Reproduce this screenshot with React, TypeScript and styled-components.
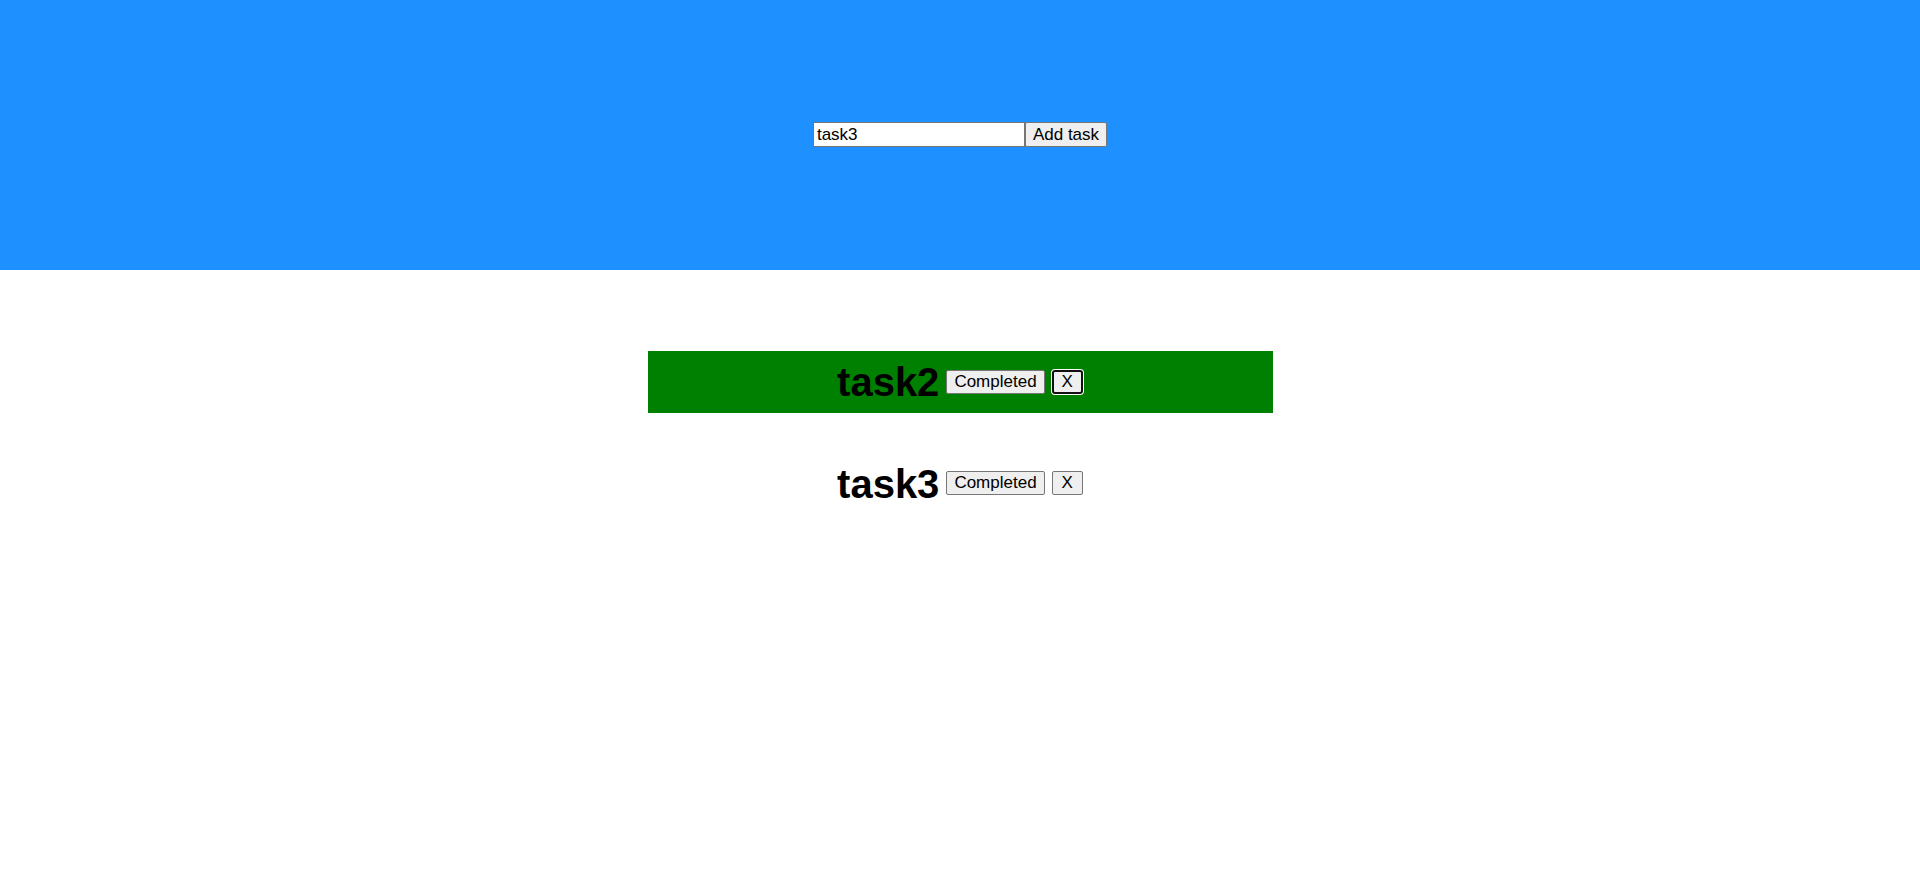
import React from "react";
import styled, { createGlobalStyle } from "styled-components";

const GlobalStyle = createGlobalStyle`
  html, body {
    margin: 0;
    padding: 0;
    background: #ffffff;
    font-family: "Liberation Sans", Arial, sans-serif;
    color: #000000;
  }
`;

const Page = styled.div`
  display: flex;
  flex-direction: column;
  min-height: 893px;
`;

const Header = styled.header`
  height: 270px;
  background: #1e90ff;
  display: flex;
  align-items: center;
  justify-content: center;
`;

const Form = styled.form`
  display: flex;
  align-items: center;
  margin-top: -1px;
`;

const TextInput = styled.input`
  box-sizing: border-box;
  width: 212px;
  height: 25px;
  padding: 2px 3px;
  border: 1px solid #767676;
  border-radius: 0;
  background: #ffffff;
  font-family: "Liberation Sans", Arial, sans-serif;
  font-size: 17px;
  color: #000000;
  outline: none;
`;

const Button = styled.button<{ $focused?: boolean; $px?: number }>`
  box-sizing: border-box;
  height: 24px;
  padding: 0 ${(p) => p.$px ?? 7}px;
  border: ${(p) => (p.$focused ? "2px solid #101010" : "1px solid #767676")};
  border-radius: ${(p) => (p.$focused ? 3 : 2)}px;
  background: #efefef;
  font-family: "Liberation Sans", Arial, sans-serif;
  font-size: 17px;
  line-height: 20px;
  color: #000000;
  cursor: pointer;
  box-shadow: ${(p) => (p.$focused ? "0 0 0 1px #ffffff" : "none")};
  outline: none;
`;

const AddButton = styled(Button)`
  height: 25px;
`;

const DeleteButton = styled(Button)`
  margin-left: 1px;
`;

const List = styled.ul`
  list-style: none;
  margin: 81px auto 0;
  padding: 0;
  width: 625px;
  display: flex;
  flex-direction: column;
  gap: 40px;
`;

const Item = styled.li<{ $done: boolean; $shift: number }>`
  height: 62px;
  display: flex;
  align-items: center;
  justify-content: center;
  gap: 6px;
  background: ${(p) => (p.$done ? "#008000" : "transparent")};

  & > button {
    margin-top: ${(p) => p.$shift}px;
  }
`;

const Title = styled.h2`
  margin: 0;
  font-size: 40px;
  font-weight: 700;
  line-height: 46px;
  margin-right: 1px;
`;

const tasks = [
  { name: "task2", done: true, focused: true },
  { name: "task3", done: false, focused: false },
];

export default function App() {
  return (
    <Page>
      <GlobalStyle />
      <Header>
        <Form onSubmit={(e) => e.preventDefault()}>
          <TextInput defaultValue="task3" />
          <AddButton type="submit">Add task</AddButton>
        </Form>
      </Header>
      <List>
        {tasks.map((t) => (
          <Item key={t.name} $done={t.done} $shift={t.done ? 0 : -2}>
            <Title>{t.name}</Title>
            <Button>Completed</Button>
            <DeleteButton $focused={t.focused} $px={t.focused ? 8 : 9}>
              X
            </DeleteButton>
          </Item>
        ))}
      </List>
    </Page>
  );
}
